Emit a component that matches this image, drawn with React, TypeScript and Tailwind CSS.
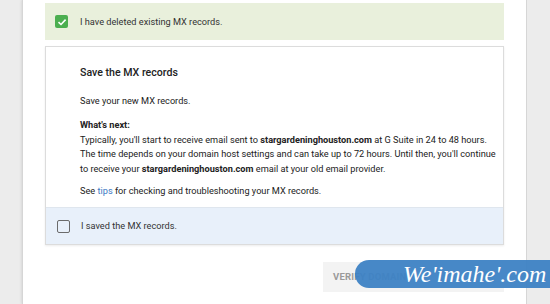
import React from "react";

export default function App() {
  return (
    <div
      className="w-[550px] h-[304px] flex bg-[#ececec] overflow-hidden relative"
      style={{ fontFamily: "Roboto, 'Liberation Sans', sans-serif" }}
    >
      <div className="w-[22px] shrink-0 bg-[#ececec]" />
      <div className="w-[505px] shrink-0 bg-white border-l border-r border-[#d6d6d6] shadow-[0_0_3px_rgba(0,0,0,0.15)] flex flex-col pl-[22px] pr-[22px] pt-[3px]">
        <div className="h-[37px] bg-[#e9f0dc] flex items-center pl-[10px] gap-[12px]">
          <div className="w-[13px] h-[13px] rounded-[2px] bg-[#4caf50] flex items-center justify-center">
            <svg width="10" height="10" viewBox="0 0 10 10">
              <path d="M1.5 5.2 L4 7.5 L8.6 2.6" fill="none" stroke="white" strokeWidth="1.6" />
            </svg>
          </div>
          <span className="text-[9.2px] text-[#333]">I have deleted existing MX records.</span>
        </div>
        <div className="mt-[6px] h-[199px] border border-[#dcdcdc] shadow-[0_1px_2px_rgba(0,0,0,0.08)] flex flex-col">
          <div className="flex-1 pl-[34px] pr-[4px] pt-[18px] text-[#222]">
            <div className="text-[10.6px] font-medium leading-[16px] text-[#222]">Save the MX records</div>
            <div className="text-[9.2px] leading-[14px] mt-[13px]">Save your new MX records.</div>
            <div className="text-[9.2px] leading-[14.5px] mt-[10px] whitespace-nowrap">
              <div className="font-bold">What's next:</div>
              <div>
                Typically, you'll start to receive email sent to <b>stargardeninghouston.com</b> at G Suite in 24 to 48 hours.
              </div>
              <div>
                The time depends on your domain host settings and can take up to 72 hours. Until then, you'll continue
              </div>
              <div>
                to receive your <b>stargardeninghouston.com</b> email at your old email provider.
              </div>
            </div>
            <div className="text-[9.2px] leading-[14px] mt-[8px]">
              See <span className="text-[#3b78c3]">tips</span> for checking and troubleshooting your MX records.
            </div>
          </div>
          <div className="h-[37px] bg-[#e8f0fa] border-t border-[#dfe6ee] flex items-center pl-[11px] gap-[11px]">
            <div className="w-[13px] h-[13px] rounded-[2px] border-[1.5px] border-[#6b6b6b]" />
            <span className="text-[9.2px] text-[#333]">I saved the MX records.</span>
          </div>
        </div>
        <div className="flex justify-end mt-[17px]">
          <div className="w-[181px] h-[30px] bg-[#f3f3f3] flex items-center pl-[10px] text-[9.5px] font-bold text-[#9a9a9a] tracking-[0.2px]">
            VERIFY DOMAIN
          </div>
        </div>
      </div>
      <div className="flex-1 bg-[#ececec]" />
      <div className="absolute left-[355px] top-[260px] w-[195px] h-[28px] bg-[#3d82c4]/95 rounded-l-[14px] flex items-center pl-[48px]">
        <span
          className="text-white text-[24px] italic leading-none"
          style={{ fontFamily: "'Liberation Serif', serif" }}
        >
          We'imahe'.com
        </span>
      </div>
    </div>
  );
}
